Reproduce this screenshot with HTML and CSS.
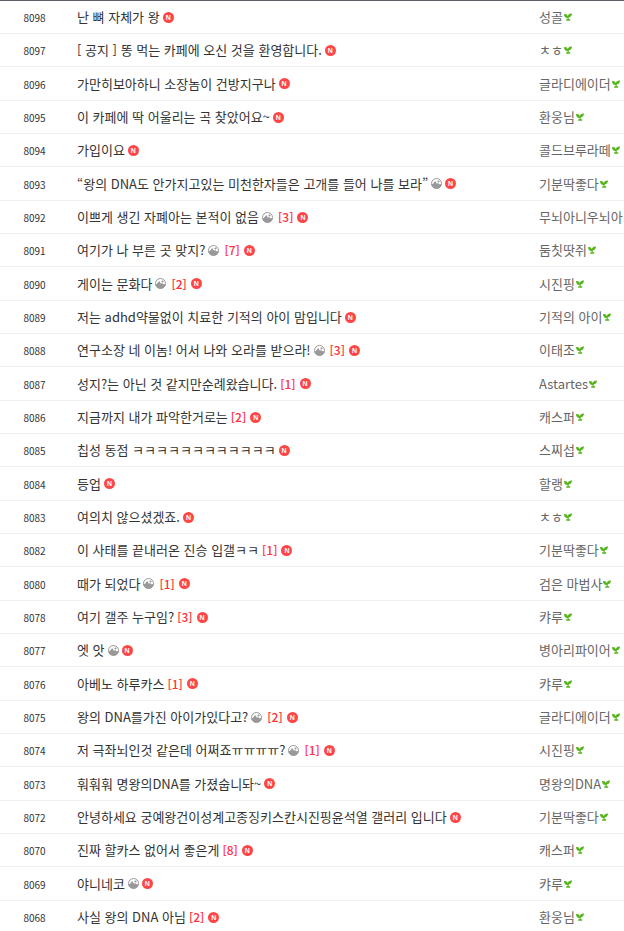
FILE: index.html
```
<!DOCTYPE html>
<html lang="ko">
<head>
    <meta charset="UTF-8">
    <meta name="viewport" content="width=device-width, initial-scale=1.0">
    <title>전체글보기</title>
    <link rel="stylesheet" href="styles.css">
</head>
<body>
    <!-- 아이콘 모음 -->
    <svg class="symbols" aria-hidden="true">
        <symbol id="photo" viewBox="0 0 11 11">
            <circle cx="5.5" cy="5.5" r="5" fill="#fff" stroke="#999" stroke-width="1"/>
            <path d="M.3 6.500 2 5.800 4.200 3 6 5.800l1-.8 1.500 1.200L10.700 6A5.300 5.300 0 0 1 .3 6.500z" fill="#999"/>
            <circle cx="7.500" cy="3.500" r="1.100" fill="#999"/>
        </symbol>
        <symbol id="sprout" viewBox="0 0 8 8">
            <path d="M0 1.200c2-.4 3.300.3 3.800 2C4.300 1.400 5.700.3 8 .6 7.900 3 6.700 4.300 4.700 4.500V6.200h1.500v1.500H2.200V6.200h1.300V4.900C1.300 4.800.1 3.400 0 1.200z" fill="#55b51a"/>
        </symbol>
    </svg>
    <table class="board">
        <colgroup>
            <col class="col-num">
            <col>
            <col class="col-name">
        </colgroup>
        <tbody>
            <tr><td class="num">8098</td><td><div class="title"><a href="#">난 뼈 자체가 왕</a><span class="new">N</span></div></td><td><div class="name"><a href="#">성골</a><svg class="level"><use href="#sprout"/></svg></div></td></tr>
            <tr><td class="num">8097</td><td><div class="title"><a href="#">[ 공지 ] 똥 먹는 카페에 오신 것을 환영합니다.</a><span class="new">N</span></div></td><td><div class="name"><a href="#">ㅊㅎ</a><svg class="level"><use href="#sprout"/></svg></div></td></tr>
            <tr><td class="num">8096</td><td><div class="title"><a href="#">가만히보아하니 소장놈이 건방지구나</a><span class="new">N</span></div></td><td><div class="name"><a href="#">글라디에이더</a><svg class="level"><use href="#sprout"/></svg></div></td></tr>
            <tr><td class="num">8095</td><td><div class="title"><a href="#">이 카페에 딱 어울리는 곡 찾았어요~</a><span class="new">N</span></div></td><td><div class="name"><a href="#">환웅님</a><svg class="level"><use href="#sprout"/></svg></div></td></tr>
            <tr><td class="num">8094</td><td><div class="title"><a href="#">가입이요</a><span class="new">N</span></div></td><td><div class="name"><a href="#">콜드브루라떼</a><svg class="level"><use href="#sprout"/></svg></div></td></tr>
            <tr><td class="num">8093</td><td><div class="title"><a href="#">“왕의 DNA도 안가지고있는 미천한자들은 고개를 들어 나를 보라”</a><svg class="photo"><use href="#photo"/></svg><span class="new">N</span></div></td><td><div class="name"><a href="#">기분딱좋다</a><svg class="level"><use href="#sprout"/></svg></div></td></tr>
            <tr><td class="num">8092</td><td><div class="title"><a href="#">이쁘게 생긴 자폐아는 본적이 없음</a><svg class="photo"><use href="#photo"/></svg><a href="#" class="cmt">[3]</a><span class="new">N</span></div></td><td><div class="name"><a href="#">무뇌아니우뇌아</a><svg class="level"><use href="#sprout"/></svg></div></td></tr>
            <tr><td class="num">8091</td><td><div class="title"><a href="#">여기가 나 부른 곳 맞지?</a><svg class="photo"><use href="#photo"/></svg><a href="#" class="cmt">[7]</a><span class="new">N</span></div></td><td><div class="name"><a href="#">둠칫땃쥐</a><svg class="level"><use href="#sprout"/></svg></div></td></tr>
            <tr><td class="num">8090</td><td><div class="title"><a href="#">게이는 문화다</a><svg class="photo"><use href="#photo"/></svg><a href="#" class="cmt">[2]</a><span class="new">N</span></div></td><td><div class="name"><a href="#">시진핑</a><svg class="level"><use href="#sprout"/></svg></div></td></tr>
            <tr><td class="num">8089</td><td><div class="title"><a href="#">저는 adhd약물없이 치료한 기적의 아이 맘입니다</a><span class="new">N</span></div></td><td><div class="name"><a href="#">기적의 아이</a><svg class="level"><use href="#sprout"/></svg></div></td></tr>
            <tr><td class="num">8088</td><td><div class="title"><a href="#">연구소장 네 이놈! 어서 나와 오라를 받으라!</a><svg class="photo"><use href="#photo"/></svg><a href="#" class="cmt">[3]</a><span class="new">N</span></div></td><td><div class="name"><a href="#">이태조</a><svg class="level"><use href="#sprout"/></svg></div></td></tr>
            <tr><td class="num">8087</td><td><div class="title"><a href="#">성지?는 아닌 것 같지만순례왔습니다.</a><a href="#" class="cmt">[1]</a><span class="new">N</span></div></td><td><div class="name"><a href="#">Astartes</a><svg class="level"><use href="#sprout"/></svg></div></td></tr>
            <tr><td class="num">8086</td><td><div class="title"><a href="#">지금까지 내가 파악한거로는</a><a href="#" class="cmt">[2]</a><span class="new">N</span></div></td><td><div class="name"><a href="#">캐스퍼</a><svg class="level"><use href="#sprout"/></svg></div></td></tr>
            <tr><td class="num">8085</td><td><div class="title"><a href="#">칩성 동점 ㅋㅋㅋㅋㅋㅋㅋㅋㅋㅋㅋㅋ</a><span class="new">N</span></div></td><td><div class="name"><a href="#">스찌섭</a><svg class="level"><use href="#sprout"/></svg></div></td></tr>
            <tr><td class="num">8084</td><td><div class="title"><a href="#">등업</a><span class="new">N</span></div></td><td><div class="name"><a href="#">할랭</a><svg class="level"><use href="#sprout"/></svg></div></td></tr>
            <tr><td class="num">8083</td><td><div class="title"><a href="#">여의치 않으셨겠죠.</a><span class="new">N</span></div></td><td><div class="name"><a href="#">ㅊㅎ</a><svg class="level"><use href="#sprout"/></svg></div></td></tr>
            <tr><td class="num">8082</td><td><div class="title"><a href="#">이 사태를 끝내러온 진승 입갤ㅋㅋ</a><a href="#" class="cmt">[1]</a><span class="new">N</span></div></td><td><div class="name"><a href="#">기분딱좋다</a><svg class="level"><use href="#sprout"/></svg></div></td></tr>
            <tr><td class="num">8080</td><td><div class="title"><a href="#">때가 되었다</a><svg class="photo"><use href="#photo"/></svg><a href="#" class="cmt">[1]</a><span class="new">N</span></div></td><td><div class="name"><a href="#">검은 마법사</a><svg class="level"><use href="#sprout"/></svg></div></td></tr>
            <tr><td class="num">8078</td><td><div class="title"><a href="#">여기 갤주 누구임?</a><a href="#" class="cmt">[3]</a><span class="new">N</span></div></td><td><div class="name"><a href="#">캬루</a><svg class="level"><use href="#sprout"/></svg></div></td></tr>
            <tr><td class="num">8077</td><td><div class="title"><a href="#">엣 앗</a><svg class="photo"><use href="#photo"/></svg><span class="new">N</span></div></td><td><div class="name"><a href="#">병아리파이어</a><svg class="level"><use href="#sprout"/></svg></div></td></tr>
            <tr><td class="num">8076</td><td><div class="title"><a href="#">아베노 하루카스</a><a href="#" class="cmt">[1]</a><span class="new">N</span></div></td><td><div class="name"><a href="#">캬루</a><svg class="level"><use href="#sprout"/></svg></div></td></tr>
            <tr><td class="num">8075</td><td><div class="title"><a href="#">왕의 DNA를가진 아이가있다고?</a><svg class="photo"><use href="#photo"/></svg><a href="#" class="cmt">[2]</a><span class="new">N</span></div></td><td><div class="name"><a href="#">글라디에이더</a><svg class="level"><use href="#sprout"/></svg></div></td></tr>
            <tr><td class="num">8074</td><td><div class="title"><a href="#">저 극좌뇌인것 같은데 어쩌죠ㅠㅠㅠㅠ?</a><svg class="photo"><use href="#photo"/></svg><a href="#" class="cmt">[1]</a><span class="new">N</span></div></td><td><div class="name"><a href="#">시진핑</a><svg class="level"><use href="#sprout"/></svg></div></td></tr>
            <tr><td class="num">8073</td><td><div class="title"><a href="#">훠훠훠 명왕의DNA를 가졌숩니돠~</a><span class="new">N</span></div></td><td><div class="name"><a href="#">명왕의DNA</a><svg class="level"><use href="#sprout"/></svg></div></td></tr>
            <tr><td class="num">8072</td><td><div class="title"><a href="#">안녕하세요 궁예왕건이성계고종징키스칸시진핑윤석열 갤러리 입니다</a><span class="new">N</span></div></td><td><div class="name"><a href="#">기분딱좋다</a><svg class="level"><use href="#sprout"/></svg></div></td></tr>
            <tr><td class="num">8070</td><td><div class="title"><a href="#">진짜 할카스 없어서 좋은게</a><a href="#" class="cmt">[8]</a><span class="new">N</span></div></td><td><div class="name"><a href="#">캐스퍼</a><svg class="level"><use href="#sprout"/></svg></div></td></tr>
            <tr><td class="num">8069</td><td><div class="title"><a href="#">야니네코</a><svg class="photo"><use href="#photo"/></svg><span class="new">N</span></div></td><td><div class="name"><a href="#">캬루</a><svg class="level"><use href="#sprout"/></svg></div></td></tr>
            <tr><td class="num">8068</td><td><div class="title"><a href="#">사실 왕의 DNA 아님</a><a href="#" class="cmt">[2]</a><span class="new">N</span></div></td><td><div class="name"><a href="#">환웅님</a><svg class="level"><use href="#sprout"/></svg></div></td></tr>
        </tbody>
    </table>
</body>
</html>
```
FILE: styles.css
```
* {
    margin: 0;
    padding: 0;
    box-sizing: border-box;
}
html {
    overflow: hidden;
}
body {
    background-color: #fff;
    font-family: "Noto Sans CJK KR", sans-serif;
    font-size: 13px;
    line-height: 20px;
    color: #333;
}
a {
    color: inherit;
    text-decoration: none;
}
a:hover {
    text-decoration: underline;
}
.symbols {
    display: none;
}
.board {
    width: 100%;
    table-layout: fixed;
    border-collapse: separate;
    border-spacing: 0;
    border-top: 1px solid #5f5e66;
}
.col-num {
    width: 69px;
}
.col-name {
    width: 85px;
}
.board td {
    height: 33px;
    vertical-align: middle;
    border-bottom: 1px solid #f0f0f0;
}
/* 3줄마다 1px 더 높게 */
.board tr:nth-child(3n) td {
    height: 34px;
}
.board .num {
    padding-top: 2px;
    font-size: 10px;
    text-align: center;
}
.title,
.name {
    display: flex;
    align-items: center;
    white-space: nowrap;
}
.title {
    gap: 3px;
    padding-left: 8px;
}
.name {
    gap: 1px;
    overflow: hidden;
    color: #666;
}
.title .cmt {
    font-size: 12px;
    font-weight: 500;
    color: #ff2f3b;
}
.photo {
    flex: none;
    width: 11px;
    height: 11px;
}
.photo + .cmt {
    margin-left: 2px;
}
.level {
    flex: none;
    width: 8px;
    height: 8px;
}
/* 새글 표시 */
.new {
    flex: none;
    width: 11px;
    height: 11px;
    border-radius: 50%;
    background-color: #ff4545;
    font-family: "Liberation Sans", sans-serif;
    font-size: 7px;
    font-weight: bold;
    line-height: 11px;
    text-align: center;
    color: #fff;
}
.cmt + .new {
    margin-left: 1px;
}
```
